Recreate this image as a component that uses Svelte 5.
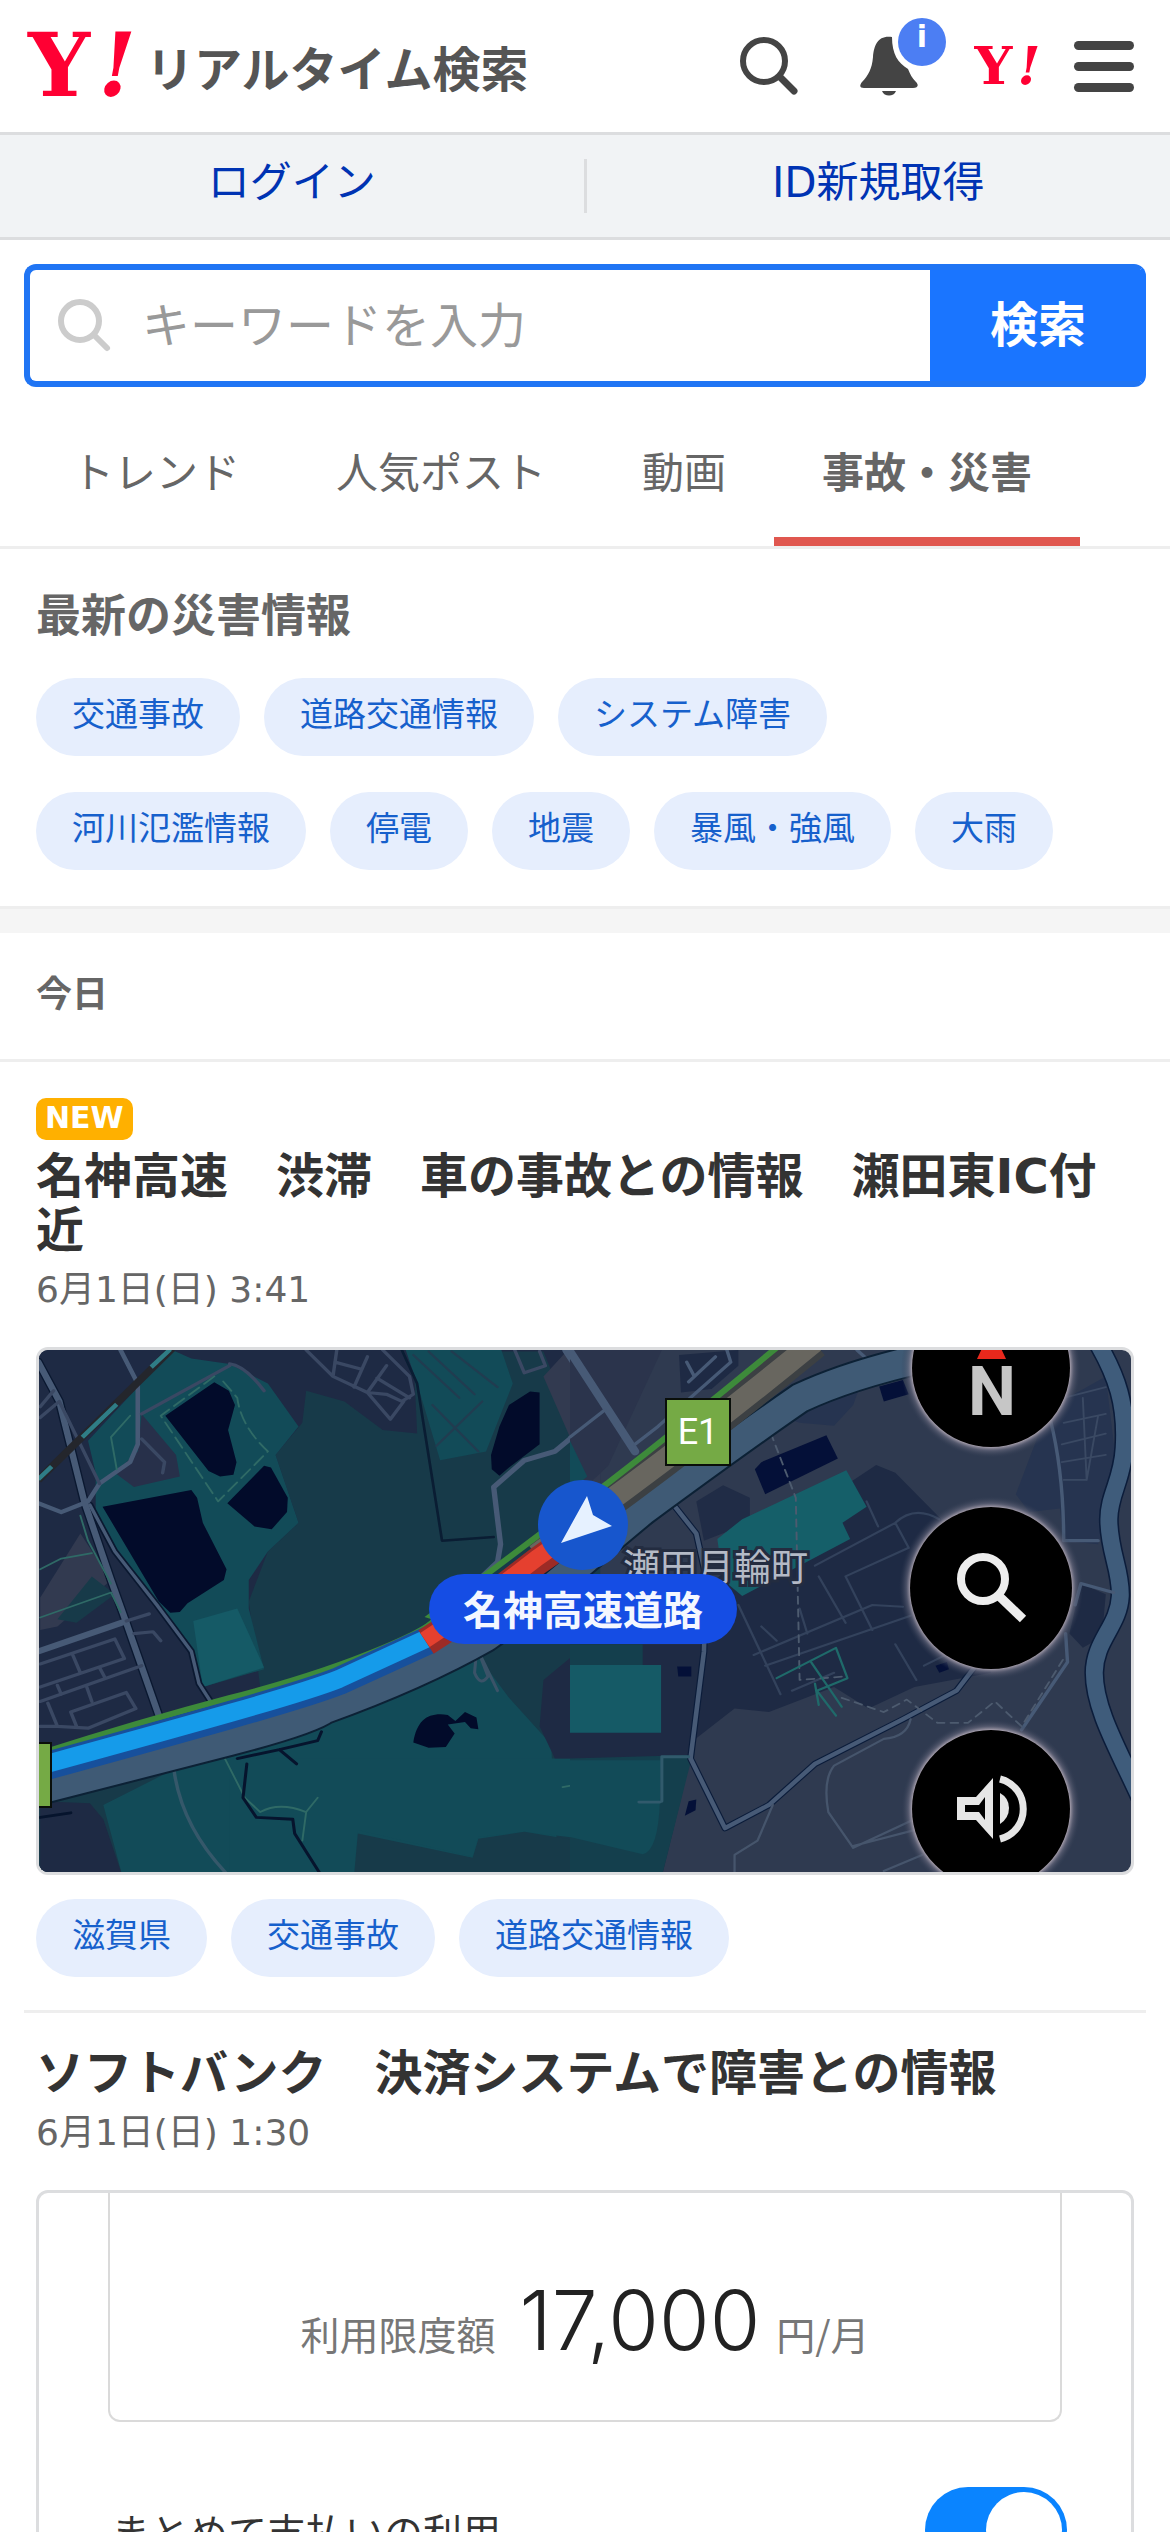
<script lang="ts">
  type Tab = { id: string; label: string };

  const tabs: Tab[] = [
    { id: 'trend', label: 'トレンド' },
    { id: 'popular', label: '人気ポスト' },
    { id: 'video', label: '動画' },
    { id: 'disaster', label: '事故・災害' },
  ];

  const topics = [
    ['交通事故', '道路交通情報', 'システム障害'],
    ['河川氾濫情報', '停電', '地震', '暴風・強風', '大雨'],
  ];

  let activeTab = $state('disaster');
  let keyword = $state('');
  let carrierBilling = $state(true);
</script>

{#snippet mark()}
  <svg class="mark" viewBox="0 0 118 104" role="img" aria-label="Yahoo! JAPAN">
    <text x="4" y="82" class="mark-text">Y<tspan class="mark-bang" x="74">!</tspan></text>
  </svg>
{/snippet}

{#snippet chips(labels: string[])}
  <ul class="chips">
    {#each labels as label}
      <li><a class="chip" href="#topic">{label}</a></li>
    {/each}
  </ul>
{/snippet}

<header class="header">
  <a class="logo" href="#top">
    {@render mark()}
    <span class="service">リアルタイム検索</span>
  </a>
  <div class="tools">
    <button class="tool search-tool" aria-label="検索">
      <svg viewBox="0 0 60 60">
        <circle cx="25" cy="25" r="21" fill="none" stroke="#444" stroke-width="6" />
        <path d="M41 41 L55 55" stroke="#444" stroke-width="7" stroke-linecap="round" />
      </svg>
    </button>
    <button class="tool bell-tool" aria-label="通知">
      <svg viewBox="0 0 60 60">
        <path
          d="M33 1 C19 -1 15 9 14 21 C13 33 9 40 3 46 C0 50 1 52 5 52 H54 C59 52 60 49 57 46 C53 42 51 38 49 33 C39 27 33 18 33 1 Z"
          fill="#444"
        />
        <path d="M23 55 H37 C35 61 25 61 23 55 Z" fill="#444" />
      </svg>
      <span class="badge">i</span>
    </button>
    <a class="portal" href="#portal">{@render mark()}</a>
    <button class="menu" aria-label="メニュー">
      <span></span>
      <span></span>
      <span></span>
    </button>
  </div>
</header>

<div class="account">
  <a href="#login">ログイン</a>
  <i></i>
  <a href="#register">ID新規取得</a>
</div>

<form class="search" onsubmit={(e) => e.preventDefault()}>
  <svg viewBox="0 0 54 54">
    <circle cx="22" cy="22" r="19" fill="none" stroke="#ccc" stroke-width="6" />
    <path d="M36 36 L49 49" stroke="#ccc" stroke-width="6" stroke-linecap="round" />
  </svg>
  <input type="text" bind:value={keyword} placeholder="キーワードを入力" aria-label="キーワードを入力" />
  <button type="submit">検索</button>
</form>

<nav class="tabs">
  {#each tabs as tab}
    <button class="tab" class:active={tab.id === activeTab} onclick={() => (activeTab = tab.id)}>
      {tab.label}
    </button>
  {/each}
</nav>

<main>
  <section class="topics">
    <h1>最新の災害情報</h1>
    <div class="topic-rows">
      {#each topics as row}
        {@render chips(row)}
      {/each}
    </div>
  </section>

  <h2 class="day">今日</h2>

  <article class="post">
    <span class="new">NEW</span>
    <h3>名神高速　渋滞　車の事故との情報　瀬田東IC付近</h3>
    <time>6月1日(日) 3:41</time>
    <div class="photo">
      <svg class="map" viewBox="0 0 1092 522" role="img" aria-label="名神高速道路の地図">
        <defs>
          <radialGradient id="glow">
            <stop offset="88%" stop-color="#a09aa8" />
            <stop offset="92%" stop-color="#6b6c80" stop-opacity="0.6" />
            <stop offset="100%" stop-color="#2f3a50" stop-opacity="0" />
          </radialGradient>
        </defs>
        <rect width="1092" height="522" fill="#2f3a50" />

        <!-- west half: land, ponds, streets -->
        <g transform="translate(-39 -20) scale(0.3827 0.3571)" fill="none" stroke-linejoin="round" stroke-linecap="round">
          <path d="M100 50 H1568 V1530 H100 Z" fill="#1e2a44" />
          <path d="M1080 60 L1420 60 1568 450 1568 1530 100 1530 100 1310 400 1240 680 1000 650 760 700 620 780 540 720 350 790 260 800 170 900 200 1000 280 1090 290 Z" fill="#173a49" />
          <path d="M1420 130 L1480 60 1568 60 1568 450 1530 400 Z" fill="#323a50" />
          <path d="M230 310 L450 56 500 80 600 95 700 150 780 270 720 350 780 540 700 620 650 700 650 780 690 950 530 1000 490 880 380 740 250 520 250 400 Z" fill="#124b58" />
          <path d="M370 235 L460 350 470 410 350 440 300 400 360 340 Z" fill="#27304a" />
          <path d="M505 815 L620 780 690 945 530 1000 Z" fill="#155a66" />
          <path d="M1060 56 L1310 56 1340 150 1270 340 1150 365 1090 150 Z" fill="#124b58" />
          <path d="M210 570 L290 700 150 830 105 840 105 750 Z" fill="#323a50" />
          <path d="M240 690 L300 740 200 820 150 810 Z" fill="#173a49" />
          <path d="M455 1230 L700 1150 1240 900 1330 1030 1440 1160 1460 1530 320 1530 270 1330 Z" fill="#124b58" />
          <path d="M1440 1200 H1568 V1430 L1370 1405 1250 1420 1235 1475 935 1400 925 1530 H600 V1200 Z" fill="#124b58" />
          <path d="M935 1410 L1235 1478 1250 1425 1370 1405 1568 1440 1568 1530 925 1530 Z" fill="#173a49" />
          <path d="M105 1320 L235 1325 270 1370 320 1530 105 1530 Z" fill="#1e2a44" />
          <path d="M1420 980 L1510 900 1568 950 1568 1200 1450 1200 1410 1110 Z" fill="#1e2a44" />

          <g fill="#020b2a">
            <path d="M432 240 L560 146 598 170 614 210 596 280 618 370 610 405 575 410 545 395 Z" />
            <path d="M594 485 L690 380 708 385 752 470 750 510 710 558 665 550 Z" />
            <path d="M268 495 L500 448 515 470 530 540 592 670 585 700 490 765 470 790 445 792 415 760 Z" />
            <path d="M1330 210 L1385 172 1410 175 1410 320 1330 385 1305 408 1285 390 1283 350 1305 270 Z" />
            <path d="M1080 1155 C1090 1090 1120 1070 1170 1078 L1190 1095 1215 1070 1245 1085 1250 1118 1230 1115 1215 1098 1170 1105 1188 1130 1165 1168 1120 1170 Z" />
          </g>

          <g stroke="#0a1830" stroke-width="24">
            <path d="M100 90 L155 200 220 480 290 700 330 820 415 1080" />
            <path d="M235 490 L300 620 410 770 500 900 520 990 550 1040" stroke-width="18" />
          </g>
          <g stroke="#475a76" stroke-width="17">
            <path d="M100 90 L155 200 220 480 290 700 330 820 415 1080" />
            <path d="M100 900 L330 815" />
            <path d="M315 56 L360 150 360 320 340 370 260 430 230 480 160 510 100 485" stroke-width="12" />
            <path d="M235 490 L300 620 410 770 500 900 520 990 550 1040" stroke-width="9" />
            <path d="M1480 56 L1568 200" stroke-width="22" />
            <path d="M1568 235 L1450 340 1370 365 1290 440 1308 600 1300 650 1250 700" stroke-width="14" />
          </g>
          <g stroke="#3a4863" stroke-width="9">
            <path d="M105 245 L155 200 L260 430 M105 215 L140 170 M370 235 L600 100 M800 56 L870 130 960 175 1020 250 1055 200 M870 130 L880 56 M875 90 L945 110 M925 160 L960 75 M1000 56 L1070 130 1080 180 1050 200 1010 180 960 175 M985 135 L1070 190 M1010 100 L960 175" />
            <path d="M105 935 L300 865 325 920 105 1000 M190 910 L210 960 M260 945 L275 975 M105 1040 L370 940 M150 995 L160 1020 M125 1045 L150 1110 H105 M240 1040 L225 995 M200 1110 L185 1070 330 1015 355 1060 230 1115 150 1110 M330 815 L390 795 M350 850 L400 845 420 870 M370 305 L430 370 425 400" />
            <path d="M1345 56 L1370 120 1425 100 1410 60" />
            <path d="M455 1235 C470 1350 520 1440 590 1520" stroke="#35586a" />
            <path d="M600 95 Q640 100 690 170" />
          </g>
          <g stroke="#2f6a66" stroke-width="5">
            <path d="M560 130 L420 240 570 480 700 340 Q630 270 620 190 L580 140" stroke-dasharray="34 16" />
            <path d="M105 670 L160 640 240 625 M105 805 L290 735 315 790 M210 520 L230 590 290 710 M290 300 L340 240 M290 300 L305 390" />
            <path d="M585 1195 L640 1310 680 1350 Q730 1320 800 1350 L830 1310 M800 1350 L790 1430 M1470 1280 Q1530 1265 1568 1290" />
          </g>
          <path d="M1050 56 L1090 150 1130 420 1155 590 1290 580" stroke="#0a1d33" stroke-width="7" />
          <path d="M1130 210 L1250 340 M1140 325 L1260 200 M1080 70 L1200 190 M1120 60 L1240 180 M1180 60 L1300 160" stroke="#213c50" stroke-width="6" />
          <path d="M620 1200 L730 1175 830 1150 840 1125 M730 1175 L775 1215 M645 1215 L635 1310 670 1365 765 1370 770 1410 835 1520 M105 1365 L185 1352" stroke="#06142d" stroke-width="8" />
          <path d="M1245 900 L1240 960 Q1255 1000 1275 970 L1250 900 1300 1010" stroke="#3a5368" stroke-width="8" />
          <path d="M100 420 L450 52" stroke="#24262c" stroke-width="20" stroke-linecap="butt" />
          <path d="M100 418 L135 382 M215 300 L305 208 M395 104 L445 54" stroke="#2f7d86" stroke-width="12" stroke-linecap="butt" />
        </g>

        <!-- east half -->
        <g transform="translate(531 -20) scale(0.3827 0.3571)" fill="none" stroke-linejoin="round" stroke-linecap="round">
          <path d="M0 56 H240 L100 380 0 480 Z" fill="#2b344c" />
          <path d="M0 310 L45 410 0 450 Z" fill="#124b58" />
          <path d="M285 70 L440 56 440 100 370 165 290 175 Z" fill="#1e2a44" />
          <path d="M545 240 L760 150 740 210 690 268 600 260 Z" fill="#263450" />
          <path d="M350 880 L380 700 460 620 800 378 850 400 970 530 1100 960 900 1000 780 1060 690 1000 520 1070 430 1060 310 1160 Z" fill="#1e2a44" />
          <path d="M330 480 L400 435 470 470 470 540 350 590 Z" fill="#202c46" />
          <path d="M0 880 H350 L320 1180 240 1530 0 1530 Z" fill="#1e2a44" />
          <path d="M0 1200 L320 1190 240 1530 0 1530 Z" fill="#143f4d" />
          <path d="M1250 220 L1400 130 1430 400 1380 600 1290 590 1280 500 1200 510 1165 460 Z" fill="#263450" />
          <path d="M1335 710 L1400 740 1390 860 1340 890 1305 850 Z" fill="#1e2a44" />
          <path d="M0 938 H238 V1128 H0 Z" fill="#155a66" />
          <path d="M0 880 H190 V938 H0 Z" fill="#143f4d" />
          <path d="M0 1205 H238 L235 1320 Q230 1460 190 1468 L0 1420 Z" fill="#124b58" />
          <path d="M385 585 L450 530 722 393 775 495 712 540 732 585 450 745 400 700 Z" fill="#155f69" />
          <g fill="#041038">
            <path d="M483 390 L500 370 670 295 700 360 510 460 Z" />
            <path d="M808 158 L870 140 885 180 820 200 Z" />
            <path d="M280 942 H317 V970 H283 Z" />
            <path d="M955 940 L985 930 990 950 965 960 Z" />
            <path d="M300 1360 L310 1320 330 1315 328 1345 Z" />
          </g>
          <path
            d="M1375 30 C1430 130 1455 210 1448 330 C1444 420 1408 460 1408 530 C1408 620 1440 670 1438 745 C1434 830 1370 870 1370 960 C1370 1060 1430 1170 1490 1310"
            stroke="#0b1c3a"
            stroke-width="52"
          />
          <path
            d="M1375 30 C1430 130 1455 210 1448 330 C1444 420 1408 460 1408 530 C1408 620 1440 670 1438 745 C1434 830 1370 870 1370 960 C1370 1060 1430 1170 1490 1310"
            stroke="#3f5c7b"
            stroke-width="44"
          />
          <path d="M260 475 L330 570 355 690 350 900 315 1200 405 1395 520 1330 640 1215 870 1090 1010 1010 1060 940" stroke="#0b1c3a" stroke-width="18" />
          <g stroke="#475a76" stroke-width="12">
            <path d="M260 475 L330 570 355 690 350 900 315 1200 405 1395 520 1330 640 1215 870 1090 1010 1010 1060 940" />
            <path d="M0 60 L170 340" stroke-width="22" />
            <path d="M0 300 L90 225 M170 320 L230 270 420 90 410 56 M305 90 L325 130 M310 145 L380 75 M750 56 L780 85" stroke-width="9" />
            <path d="M1255 250 Q1290 400 1290 590 L1380 590 M1320 770 L1335 710 1420 735 M1295 850 L1300 930 1180 1120" stroke-width="9" />
            <path d="M240 1320 V1195 H310 M180 1322 H235" stroke="#315a6c" stroke-width="8" />
          </g>
          <g stroke="#33425c" stroke-width="6">
            <path d="M640 660 L850 540 Q900 490 965 530 M850 540 L885 610 720 690 790 840 M480 910 L790 770 870 775 M440 770 L550 1020 M510 940 L890 800 M600 780 L620 850 M650 690 L720 820 M850 880 L905 980 M500 830 L540 870 M580 1010 L690 960 M775 480 L805 550 M925 940 L1000 900" />
            <path d="M890 1090 Q880 1140 820 1145 L690 1220 Q660 1260 675 1350 L740 1450 890 1375 M530 1330 L490 1430 430 1470 430 1520 M740 1445 L920 1395 M920 1470 L820 1515" stroke="#46556c" />
            <path d="M1290 190 L1400 160 M1290 260 L1400 235 M1285 320 L1400 290 M1285 370 L1400 350 M1290 420 L1350 420 1340 190 M1380 240 L1350 420" stroke="#3a4963" stroke-width="5" />
          </g>
          <path d="M525 290 L590 470 600 980 720 970 M710 1030 L820 1070 880 1035 960 1100 1040 1100 1110 1040 1180 1110 1290 920" stroke="#4d5b6f" stroke-width="5" stroke-dasharray="20 16" />
          <path d="M540 975 L695 890 725 975 645 1010 695 1080 M630 930 L710 1055 M640 990 L650 1050" stroke="#1f6a6a" stroke-width="6" />
        </g>

        <!-- expressway with the congested stretch -->
        <g fill="none">
          <path d="M0 440 Q110 412 191 391 T286 359 Q380 325 447 287 C520 235 550 205 605 160 Q700 90 761 48 Q810 25 885 8" stroke="#0c2135" stroke-width="32" />
          <path d="M0 440 Q110 412 191 391 T286 359 Q380 325 447 287 C520 235 550 205 605 160 Q700 90 761 48 Q810 25 885 8" stroke="#3f5a75" stroke-width="28" />
          <path d="M497 205 L588 138 Q680 70 775 -8" stroke="#3c4043" stroke-width="34" />
          <path d="M497 205 L588 138 Q680 70 775 -8" stroke="#68665f" stroke-width="22" />
          <path d="M0 404 Q100 372 191 348 Q280 325 344 298 T392 266 L569 133 Q650 70 742 -6" stroke="#3d8a3a" stroke-width="6" />
          <path d="M0 418 Q110 388 191 365 T300 331 L390 290" stroke="#17509c" stroke-width="28" />
          <path d="M0 416 Q110 386 191 363 T300 329 L389 288" stroke="#159bea" stroke-width="18" />
          <path d="M387 292 L430 264 500 210 540 182" stroke="#9c2b26" stroke-width="28" />
          <path d="M386 290 L428 262 498 208 538 180" stroke="#e5402f" stroke-width="17" />
        </g>
        <rect x="-10" y="393" width="22" height="64" fill="#75aa45" stroke="#0a0f0a" stroke-width="2" />
        <rect x="627" y="49" width="64" height="66" fill="#75aa45" stroke="#0a0f0a" stroke-width="2" />
        <text x="659" y="94" class="route">E1</text>

        <circle cx="544" cy="175" r="45" fill="#1756cd" />
        <path d="M522 193 L548 146 554 165 573 176 Z" fill="#e6f1ff" />
        <text x="584" y="231" class="town">瀬田月輪町</text>
        <rect x="390" y="224" width="308" height="70" rx="35" fill="#154de4" />
        <text x="544" y="275" class="road">名神高速道路</text>

        <g>
          <circle cx="952" cy="18" r="90" fill="url(#glow)" />
          <circle cx="952" cy="238" r="92" fill="url(#glow)" />
          <circle cx="952" cy="459" r="90" fill="url(#glow)" />
          <circle cx="952" cy="18" r="79" />
          <circle cx="952" cy="238" r="81" />
          <circle cx="952" cy="459" r="79" />
          <path d="M938 9 L945 -6 H960 L967 9 Z" fill="#e8281c" />
          <text x="953" y="65" class="north">N</text>
          <circle cx="944" cy="229" r="22" fill="none" stroke="#ededed" stroke-width="8" />
          <path d="M960 246 L984 269" stroke="#ededed" stroke-width="9" />
          <path
            d="M918 447 H937 L954 428 V489 L937 470 H918 Z M926 455 V462 H940 L946 470 V447 L940 455 Z"
            fill="#e6e6e6"
            fill-rule="evenodd"
          />
          <path d="M961 443 Q970 448 970 458 T961 474 Z" fill="#e6e6e6" />
          <path d="M961 429 C992 437 992 481 961 489" fill="none" stroke="#e6e6e6" stroke-width="7" />
        </g>
      </svg>
    </div>
    {@render chips(['滋賀県', '交通事故', '道路交通情報'])}
  </article>

  <article class="post">
    <h3>ソフトバンク　決済システムで障害との情報</h3>
    <time>6月1日(日) 1:30</time>
    <div class="photo billing">
      <p class="limit">
        利用限度額 <strong>17,000</strong> 円/月
      </p>
      <label class="billing-row">
        まとめて支払いの利用
        <input type="checkbox" bind:checked={carrierBilling} />
      </label>
    </div>
  </article>
</main>

<style>
  :global(body) {
    margin: 0;
    background: #fff;
    color: #333;
    font-family: 'DejaVu Sans', 'Noto Sans CJK JP', sans-serif;
  }

  a {
    text-decoration: none;
  }

  button,
  input {
    font: inherit;
    border: 0;
    padding: 0;
    margin: 0;
    background: none;
  }

  svg {
    display: block;
  }

  h1,
  h2,
  h3,
  p,
  ul {
    margin: 0;
    padding: 0;
  }

  .header {
    display: flex;
    align-items: center;
    justify-content: space-between;
    height: 132px;
    padding: 0 36px 0 24px;
    border-bottom: 3px solid #dcdddf;
  }

  .logo {
    display: flex;
    align-items: center;
    gap: 4px;
  }

  .mark {
    width: 118px;
    height: 104px;
  }

  .mark-text {
    font-family: 'DejaVu Serif', serif;
    font-size: 87px;
    font-weight: 700;
    fill: #ff0033;
  }

  .mark-bang {
    font-style: italic;
  }

  .service {
    font-family: 'Noto Sans CJK JP', sans-serif;
    font-size: 48px;
    font-weight: 700;
    line-height: 72px;
    color: #555;
  }

  .tools {
    display: flex;
    align-items: center;
  }

  .tool {
    position: relative;
    width: 60px;
    height: 60px;
  }

  .search-tool {
    margin-right: 60px;
  }

  .bell-tool {
    margin-right: 53px;
  }

  .badge {
    position: absolute;
    top: -18px;
    right: -27px;
    width: 48px;
    height: 48px;
    border-radius: 50%;
    background: #4c7ef3;
    color: #fff;
    font-size: 30px;
    font-weight: 700;
    line-height: 38px;
  }

  .portal {
    margin-right: 30px;
  }

  .portal .mark {
    width: 72px;
    height: 64px;
  }

  .menu {
    display: flex;
    flex-direction: column;
    gap: 12px;
    width: 60px;
  }

  .menu span {
    height: 9px;
    border-radius: 5px;
    background: #444;
  }

  .account {
    display: flex;
    align-items: center;
    height: 102px;
    background: #f1f3f5;
    border-bottom: 3px solid #dcdddf;
  }

  .account a {
    flex: 1;
    padding-bottom: 6px;
    text-align: center;
    font-size: 42px;
    line-height: 60px;
    color: #0033b3;
  }

  .account i {
    width: 3px;
    height: 54px;
    background: #dcdddf;
  }

  .search {
    display: flex;
    align-items: center;
    box-sizing: border-box;
    height: 123px;
    margin: 24px 24px 0;
    padding-left: 28px;
    border: 6px solid #2075f4;
    border-right-color: #1a75ff;
    border-radius: 12px;
    background: #fff;
  }

  .search svg {
    width: 54px;
    height: 54px;
  }

  .search input {
    flex: 1;
    min-width: 0;
    height: 100%;
    padding-left: 30px;
    font-size: 48px;
    outline: none;
  }

  .search input::placeholder {
    color: #999;
    opacity: 1;
  }

  .search button {
    width: 210px;
    height: 100%;
    padding: 0 0 9px 6px;
    background: #1a75ff;
    color: #fff;
    font-size: 48px;
    font-weight: 700;
  }

  .tabs {
    display: flex;
    margin-top: 24px;
    padding: 0 24px;
    border-bottom: 3px solid #eee;
  }

  .tab {
    padding: 0 48px;
    border-bottom: 9px solid transparent;
    font-size: 42px;
    line-height: 126px;
    color: #666;
  }

  .tab.active {
    border-bottom-color: #e0574f;
    font-weight: 700;
  }

  .topics {
    padding: 35px 36px 36px;
    border-bottom: 3px solid #eee;
  }

  h1 {
    margin-bottom: 28px;
    font-size: 45px;
    line-height: 66px;
    color: #666;
  }

  .topic-rows {
    display: flex;
    flex-direction: column;
    gap: 36px;
  }

  .chips {
    display: flex;
    gap: 24px;
    list-style: none;
  }

  .chip {
    display: block;
    padding: 0 36px 4px;
    border-radius: 39px;
    background: #e6eefd;
    font-size: 33px;
    line-height: 74px;
    color: #1660cc;
  }

  .day {
    padding: 0 36px 3px;
    border-top: 24px solid #f5f5f5;
    border-bottom: 3px solid #eee;
    font-size: 36px;
    line-height: 123px;
    color: #666;
  }

  .post {
    margin: 0 24px;
    padding: 36px 12px 33px;
  }

  .post + .post {
    padding-top: 33px;
    border-top: 3px solid #eee;
  }

  .new {
    display: block;
    width: fit-content;
    margin-bottom: 9px;
    padding: 0 9px 2px;
    border-radius: 10px;
    background: #ffb000;
    color: #fff;
    font-size: 30px;
    font-weight: 700;
    line-height: 40px;
  }

  h3 {
    font-size: 48px;
    line-height: 54px;
  }

  time {
    display: block;
    margin-top: 12px;
    font-size: 36px;
    line-height: 42px;
    color: #666;
  }

  .photo {
    margin: 36px 0 24px;
    border: 3px solid #dcdddf;
    border-radius: 12px;
    overflow: hidden;
  }

  .map {
    width: 100%;
    height: auto;
  }

  .map text {
    font-family: 'Noto Sans CJK JP', sans-serif;
  }

  .map .route {
    font-family: Roboto, sans-serif;
    font-size: 36px;
    text-anchor: middle;
    fill: #fff;
  }

  .map .town {
    font-size: 37px;
    fill: #b4bac6;
    stroke: #232c40;
    stroke-width: 6px;
    paint-order: stroke;
  }

  .map .road {
    font-size: 40px;
    font-weight: 700;
    text-anchor: middle;
    fill: #f4f7ff;
  }

  .map .north {
    font-family: Roboto, sans-serif;
    font-size: 68px;
    font-weight: 700;
    text-anchor: middle;
    fill: #c6c6c6;
  }

  .billing {
    padding-bottom: 24px;
    font-family: 'Noto Sans CJK JP', sans-serif;
  }

  .limit {
    display: flex;
    align-items: baseline;
    justify-content: center;
    gap: 16px;
    margin: 0 69px;
    padding: 78px 0 37px;
    border: 2px solid #dadada;
    border-top: 0;
    border-radius: 0 0 12px 12px;
    font-size: 39px;
    line-height: 100px;
    color: #777;
  }

  .limit strong {
    margin-left: 8px;
    font-family: Inter, sans-serif;
    font-size: 82px;
    font-weight: 300;
    color: #222;
  }

  .billing-row {
    display: flex;
    align-items: center;
    justify-content: space-between;
    margin-top: 65px;
    padding: 0 64px 0 72px;
    font-size: 39px;
    color: #333;
  }

  .billing-row input {
    appearance: none;
    display: flex;
    width: 142px;
    height: 86px;
    padding: 5px;
    box-sizing: border-box;
    border-radius: 43px;
    background: #ccc;
  }

  .billing-row input::before {
    content: '';
    width: 76px;
    border-radius: 50%;
    background: #fff;
  }

  .billing-row input:checked {
    justify-content: flex-end;
    background: #0a84ff;
  }
</style>
